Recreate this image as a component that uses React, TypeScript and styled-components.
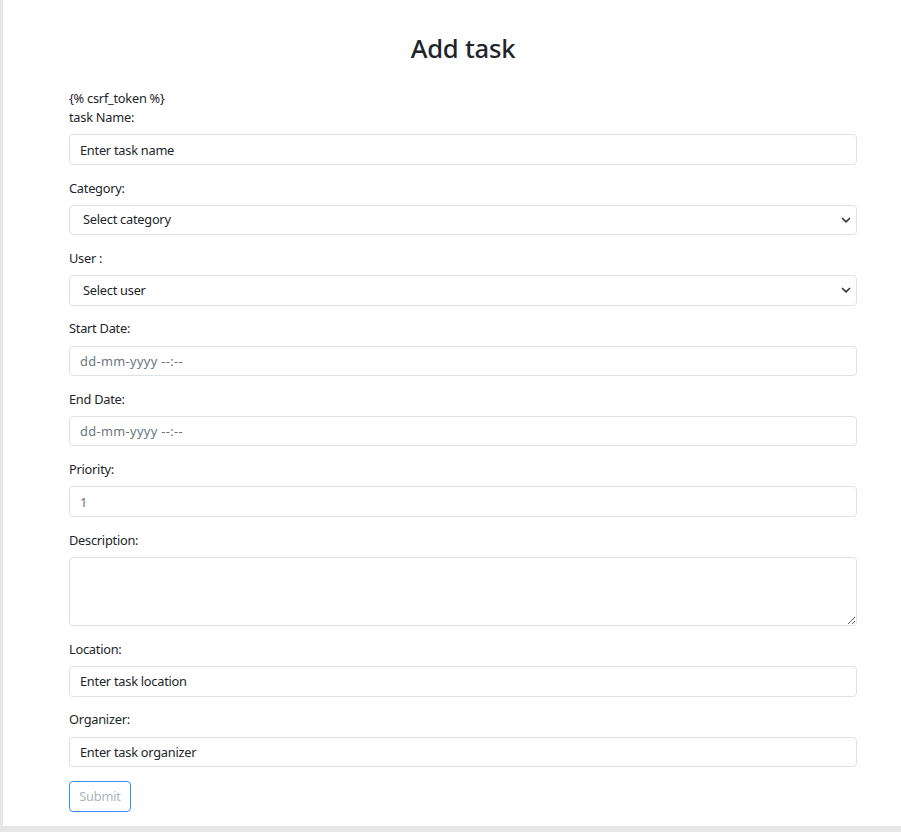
import React from "react";
import styled, { createGlobalStyle } from "styled-components";

const GlobalStyle = createGlobalStyle`
  html, body {
    margin: 0;
    padding: 0;
    background: #e6e6e6;
  }
  body {
    font-family: "Noto Sans", "Open Sans", "Liberation Sans", sans-serif;
    color: #212529;
  }
  * {
    box-sizing: border-box;
  }
`;

const Card = styled.div`
  margin-left: 3px;
  min-height: 826px;
  background: #ffffff;
  padding: 33px 0 14px 66px;
`;

const Form = styled.form`
  width: 788px;
`;

const Title = styled.h2`
  margin: 0 0 25px 0;
  text-align: center;
  font-size: 25.6px;
  line-height: 31px;
  font-weight: 500;
  letter-spacing: -0.2px;
  color: #212529;
`;

const Token = styled.div`
  font-size: 12.8px;
  line-height: 19.2px;
  letter-spacing: -0.25px;
`;

const Group = styled.div`
  margin-bottom: 13.8px;
`;

const Label = styled.label`
  display: block;
  font-size: 12.8px;
  line-height: 19.2px;
  margin-bottom: 7px;
  letter-spacing: -0.25px;
  color: #212529;
`;

const fieldBase = `
  display: block;
  width: 100%;
  font-family: inherit;
  font-size: 12.8px;
  line-height: 19.2px;
  letter-spacing: -0.25px;
  color: #212529;
  background: #ffffff;
  border: 1px solid #dee2e6;
  border-radius: 4px;
  outline: none;
`;

const Input = styled.input<{ $muted?: boolean }>`
  ${fieldBase}
  height: 30.4px;
  padding: 4.8px 10px;
  color: ${(p) => (p.$muted ? "#6c757d" : "#212529")};
  letter-spacing: ${(p) => (p.$muted ? "0.35px" : "-0.25px")};
  &::placeholder {
    color: #6c757d;
    opacity: 1;
  }
`;

const SelectWrap = styled.div`
  position: relative;
`;

const Select = styled.select`
  ${fieldBase}
  height: 30.4px;
  padding: 4px 30px 4px 13px;
  appearance: none;
  -webkit-appearance: none;
`;

const Chevron = styled.svg`
  position: absolute;
  right: 6px;
  top: 11px;
  width: 10px;
  height: 8px;
  pointer-events: none;
`;

const TextArea = styled.textarea`
  ${fieldBase}
  height: 69.5px;
  padding: 5px 10px;
  resize: vertical;
`;

const SubmitButton = styled.button`
  display: block;
  font-family: inherit;
  font-size: 12.8px;
  line-height: 19.2px;
  height: 31px;
  width: 62px;
  padding: 4px 0;
  text-align: center;
  letter-spacing: -0.2px;
  color: #adb5bd;
  background: #ffffff;
  border: 1px solid #3b8cfc;
  border-radius: 4px;
  cursor: pointer;
`;

type Field = {
  label: string;
  kind: "text" | "select" | "date" | "number" | "textarea";
  value?: string;
};

const fields: Field[] = [
  { label: "task Name:", kind: "text", value: "Enter task name" },
  { label: "Category:", kind: "select", value: "Select category" },
  { label: "User :", kind: "select", value: "Select user" },
  { label: "Start Date:", kind: "date", value: "dd-mm-yyyy --:--" },
  { label: "End Date:", kind: "date", value: "dd-mm-yyyy --:--" },
  { label: "Priority:", kind: "number", value: "1" },
  { label: "Description:", kind: "textarea" },
  { label: "Location:", kind: "text", value: "Enter task location" },
  { label: "Organizer:", kind: "text", value: "Enter task organizer" },
];

const renderField = (f: Field) => {
  switch (f.kind) {
    case "select":
      return (
        <SelectWrap>
          <Select defaultValue="">
            <option value="">{f.value}</option>
          </Select>
          <Chevron viewBox="0 0 10 8">
            <path d="M1.5 2.5 L5 5.8 L8.5 2.5" fill="none" stroke="#343a40" strokeWidth="1.7" strokeLinecap="round" strokeLinejoin="round" />
          </Chevron>
        </SelectWrap>
      );
    case "textarea":
      return <TextArea />;
    case "date":
    case "number":
      return <Input type="text" $muted readOnly value={f.value} />;
    default:
      return <Input type="text" readOnly value={f.value} />;
  }
};

const App = () => {
  return (
    <>
      <GlobalStyle />
      <Card>
        <Form onSubmit={(e) => e.preventDefault()}>
          <Title>Add task</Title>
          <Token>{"{% csrf_token %}"}</Token>
          {fields.map((f) => (
            <Group key={f.label}>
              <Label>{f.label}</Label>
              {renderField(f)}
            </Group>
          ))}
          <SubmitButton type="submit">Submit</SubmitButton>
        </Form>
      </Card>
    </>
  );
};

export default App;
